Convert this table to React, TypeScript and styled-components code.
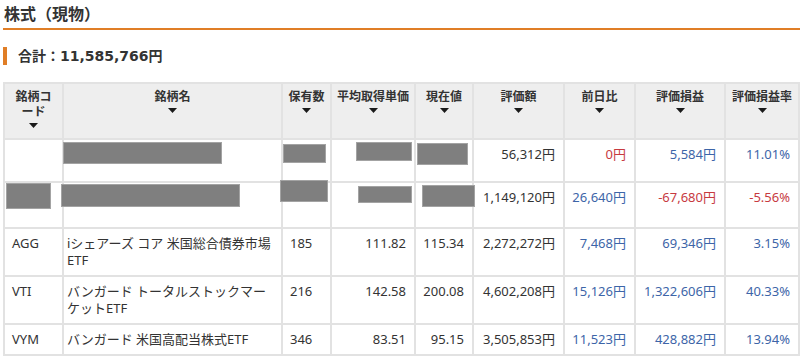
import React from 'react'
import styled, { createGlobalStyle } from 'styled-components'

type Tone = 'pos' | 'neg' | undefined

interface Cell {
  text: string
  tone?: Tone
}

interface Holding {
  code: string
  name: string
  qty: string
  avg: string
  price: string
  value: string
  day: Cell
  pl: Cell
  rate: Cell
  height?: number
}

interface Mask {
  x: number
  y: number
  w: number
  h: number
}

const HEADERS = ['銘柄コード', '銘柄名', '保有数', '平均取得単価', '現在値', '評価額', '前日比', '評価損益', '評価損益率']
const COL_WIDTHS = [59, 219, 49, 84, 58, 91, 71, 90, 74]

const HOLDINGS: Holding[] = [
  { code: '', name: '', qty: '', avg: '', price: '', value: '56,312円', day: { text: '0円', tone: 'neg' }, pl: { text: '5,584円', tone: 'pos' }, rate: { text: '11.01%', tone: 'pos' }, height: 43 },
  { code: '', name: '', qty: '', avg: '', price: '', value: '1,149,120円', day: { text: '26,640円', tone: 'pos' }, pl: { text: '-67,680円', tone: 'neg' }, rate: { text: '-5.56%', tone: 'neg' }, height: 46 },
  { code: 'AGG', name: 'iシェアーズ コア 米国総合債券市場ETF', qty: '185', avg: '111.82', price: '115.34', value: '2,272,272円', day: { text: '7,468円', tone: 'pos' }, pl: { text: '69,346円', tone: 'pos' }, rate: { text: '3.15%', tone: 'pos' } },
  { code: 'VTI', name: 'バンガード トータルストックマーケットETF', qty: '216', avg: '142.58', price: '200.08', value: '4,602,208円', day: { text: '15,126円', tone: 'pos' }, pl: { text: '1,322,606円', tone: 'pos' }, rate: { text: '40.33%', tone: 'pos' } },
  { code: 'VYM', name: 'バンガード 米国高配当株式ETF', qty: '346', avg: '83.51', price: '95.15', value: '3,505,853円', day: { text: '11,523円', tone: 'pos' }, pl: { text: '428,882円', tone: 'pos' }, rate: { text: '13.94%', tone: 'pos' } },
]

// 黒塗り部分 (テーブル左上基準)
const MASKS: Mask[] = [
  { x: 60, y: 60, w: 159, h: 22 },
  { x: 280, y: 62, w: 43, h: 19 },
  { x: 353, y: 60, w: 56, h: 19 },
  { x: 414, y: 61, w: 51, h: 22 },
  { x: 3, y: 101, w: 45, h: 26 },
  { x: 58, y: 102, w: 179, h: 23 },
  { x: 277, y: 98, w: 48, h: 22 },
  { x: 355, y: 104, w: 54, h: 17 },
  { x: 419, y: 103, w: 53, h: 22 },
]

const SortArrow = () => (
  <ArrowIcon width='9' height='5' viewBox='0 0 9 5'>
    <path d='M0 0H9L4.5 5Z' fill='#1a1a1a' />
  </ArrowIcon>
)

const App: React.FC = () => {
  return (
    <Page>
      <GlobalStyle />
      <Title>株式（現物）</Title>
      <Total>合計：11,585,766円</Total>

      <TableWrap>
        <Table>
          <colgroup>
            {COL_WIDTHS.map((w, i) => (
              <col key={i} style={{ width: w }} />
            ))}
          </colgroup>
          <thead>
            <tr>
              {HEADERS.map((h) => (
                <Th key={h}>
                  <HeadLabel>{h === '銘柄コード' ? <>銘柄コ<br />ード</> : h}</HeadLabel>
                  <SortArrow />
                </Th>
              ))}
            </tr>
          </thead>
          <tbody>
            {HOLDINGS.map((row, i) => (
              <Row key={i} $h={row.height}>
                <CodeCell>{row.code}</CodeCell>
                <NameCell>{row.name}</NameCell>
                <QtyCell>{row.qty}</QtyCell>
                <NumCell>{row.avg}</NumCell>
                <NumCell>{row.price}</NumCell>
                <NumCell>{row.value}</NumCell>
                <NumCell $tone={row.day.tone}>{row.day.text}</NumCell>
                <NumCell $tone={row.pl.tone}>{row.pl.text}</NumCell>
                <NumCell $tone={row.rate.tone}>{row.rate.text}</NumCell>
              </Row>
            ))}
          </tbody>
        </Table>

        {MASKS.map((m, i) => (
          <Redact key={i} $x={m.x} $y={m.y} $w={m.w} $h={m.h} />
        ))}
      </TableWrap>
    </Page>
  )
}

export default App

// ----- スタイル ----- //
const GlobalStyle = createGlobalStyle`
  html, body {
    margin: 0;
    padding: 0;
    background: #fff;
  }
  body {
    font-family: 'Noto Sans', 'Noto Sans CJK JP', sans-serif;
    color: #333;
  }
`

const Page = styled.div`
  width: 800px;
  padding: 0 0 0 3px;
  box-sizing: border-box;
`

const Title = styled.h2`
  margin: 0;
  padding: 4px 0 4px 1px;
  font-size: 16px;
  line-height: 20px;
  font-weight: 700;
  color: #333;
  border-bottom: 2px solid #e07e26;
`

const Total = styled.div`
  margin: 17px 0 17px;
  padding-left: 11px;
  border-left: 4px solid #e07e26;
  font-family: 'DejaVu Sans', 'Noto Sans CJK JP', sans-serif;
  font-size: 14px;
  line-height: 18px;
  font-weight: 700;
  color: #333;
`

const TableWrap = styled.div`
  position: relative;
  width: 795px;
`

const Table = styled.table`
  width: 795px;
  table-layout: fixed;
  border-collapse: collapse;
  font-size: 13px;
  line-height: 17px;
`

const Th = styled.th`
  height: 56px;
  padding: 5px 2px 0;
  box-sizing: border-box;
  background: #eeeeee;
  border: 2px solid #e2e2e2;
  vertical-align: top;
  text-align: center;
  font-size: 12px;
  line-height: 15px;
  font-weight: 700;
  color: #333;
`

const HeadLabel = styled.div`
  white-space: nowrap;
`

const ArrowIcon = styled.svg`
  display: block;
  margin: 4px auto 0;
`

const Row = styled.tr<{ $h?: number }>`
  height: ${(p) => (p.$h ? `${p.$h}px` : 'auto')};
`

const Td = styled.td`
  padding: 6px 8px 6px 7px;
  border: 2px solid #e2e2e2;
  vertical-align: top;
  color: #333;
  white-space: nowrap;
`

const CodeCell = styled(Td)``

const NameCell = styled(Td)`
  padding-left: 3px;
  padding-right: 10px;
  white-space: normal;
`

const NumCell = styled(Td)<{ $tone?: Tone }>`
  text-align: right;
  color: ${(p) => (p.$tone === 'pos' ? '#3d65a8' : p.$tone === 'neg' ? '#c73a3f' : '#333')};
`

const QtyCell = styled(NumCell)`
  padding-right: 18px;
`

const Redact = styled.span<{ $x: number; $y: number; $w: number; $h: number }>`
  position: absolute;
  left: ${(p) => p.$x}px;
  top: ${(p) => p.$y}px;
  width: ${(p) => p.$w}px;
  height: ${(p) => p.$h}px;
  box-sizing: border-box;
  background: #7f7f7f;
  border: 1px solid #a3a3a3;
`
